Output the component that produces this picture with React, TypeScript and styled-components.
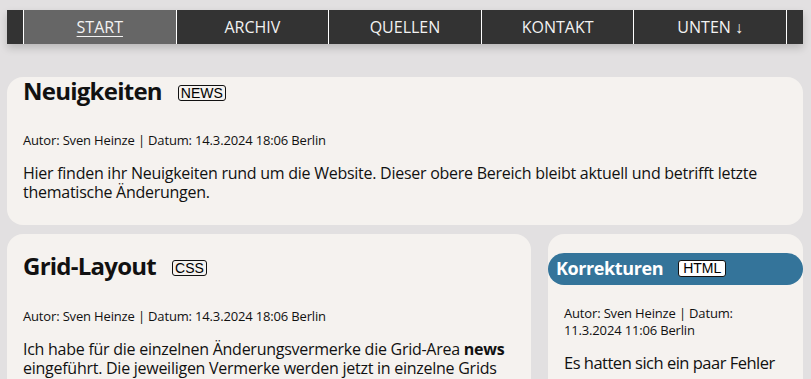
import React from "react";
import styled, { createGlobalStyle } from "styled-components";

const Global = createGlobalStyle`
  html, body { margin: 0; padding: 0; }
  body {
    background: #e2e0e1;
    font-family: "Open Sans", "Noto Sans", sans-serif;
    color: #111;
    overflow: hidden;
  }
`;

const Page = styled.div`
  padding: 10px 8px 0 7px;
  height: 379px;
  box-sizing: border-box;
`;

const Nav = styled.nav`
  background: #333;
  height: 34px;
  padding: 0 16px;
  display: flex;
  box-shadow: 0 4px 8px rgba(0, 0, 0, 0.18);
`;

const NavItem = styled.a<{ $active?: boolean; $last?: boolean }>`
  flex: 1;
  display: flex;
  align-items: center;
  justify-content: center;
  border-left: 1px solid #fff;
  border-right: ${(p) => (p.$last ? "1px solid #fff" : "none")};
  background: ${(p) => (p.$active ? "#666" : "transparent")};
  color: #f2f2f2;
  font-size: 16px;
  text-decoration: ${(p) => (p.$active ? "underline" : "none")};
  text-underline-offset: 3px;
  text-decoration-thickness: 1px;
`;

const Main = styled.main`
  margin-top: 33px;
  display: grid;
  grid-template-columns: 524px 1fr;
  grid-template-rows: auto 1fr;
  column-gap: 17px;
  row-gap: 9px;
`;

const Card = styled.section<{ $wide?: boolean; $top?: number; $pad?: number }>`
  grid-column: ${(p) => (p.$wide ? "1 / -1" : "auto")};
  background: #f5f2ef;
  border-radius: 16px;
  padding: ${(p) => p.$top ?? 20}px ${(p) => p.$pad ?? 16}px 23px;
  min-height: 0;
`;

const Title = styled.h2`
  margin: 0;
  font-size: 24px;
  line-height: 28px;
  font-weight: 700;
  letter-spacing: -0.75px;
  display: flex;
  align-items: center;
  gap: 16px;
`;

const Badge = styled.span<{ $fill?: boolean }>`
  font-family: "Liberation Sans", Arial, sans-serif;
  font-size: 14px;
  font-weight: 400;
  letter-spacing: 0;
  line-height: 13px;
  border: 1px solid #111;
  border-radius: 3px;
  padding: ${(p) => (p.$fill ? "1px 4px 1px" : "1px 2px 0")};
  color: #000;
  background: ${(p) => (p.$fill ? "#fff" : "transparent")};
  margin-top: ${(p) => (p.$fill ? 1 : 3)}px;
`;

const Band = styled.h2`
  margin: 0 -16px;
  height: 32px;
  background: #34749a;
  border-radius: 16px;
  color: #fff;
  font-size: 18px;
  font-weight: 700;
  letter-spacing: -0.4px;
  display: flex;
  align-items: center;
  gap: 15px;
  padding-left: 8px;
  padding-bottom: 2px;
  box-sizing: border-box;
`;

const Meta = styled.p<{ $top?: number }>`
  margin: ${(p) => p.$top ?? 20}px 0 0;
  font-size: 13px;
  line-height: 17px;
  letter-spacing: -0.16px;
`;

const Text = styled.p<{ $large?: boolean }>`
  margin: ${(p) => (p.$large ? 13 : 15)}px 0 0;
  font-size: ${(p) => (p.$large ? 16.5 : 16)}px;
  line-height: ${(p) => (p.$large ? 22 : 19)}px;
  letter-spacing: ${(p) => (p.$large ? -0.5 : -0.26)}px;
`;

const navItems = ["START", "ARCHIV", "QUELLEN", "KONTAKT", "UNTEN ↓"];

export default function App() {
  return (
    <>
      <Global />
      <Page>
        <Nav>
          {navItems.map((n, i) => (
            <NavItem key={n} $active={i === 0} $last={i === navItems.length - 1}>
              {n}
            </NavItem>
          ))}
        </Nav>
        <Main>
          <Card $wide $top={0}>
            <Title>
              Neuigkeiten <Badge>NEWS</Badge>
            </Title>
            <Meta $top={27}>Autor: Sven Heinze | Datum: 14.3.2024 18:06 Berlin</Meta>
            <Text>
              Hier finden ihr Neuigkeiten rund um die Website. Dieser obere Bereich bleibt aktuell und betrifft letzte
              thematische Änderungen.
            </Text>
          </Card>
          <Card $top={18}>
            <Title>
              Grid-Layout <Badge>CSS</Badge>
            </Title>
            <Meta $top={28}>Autor: Sven Heinze | Datum: 14.3.2024 18:06 Berlin</Meta>
            <Text>
              Ich habe für die einzelnen Änderungsvermerke die Grid-Area <b>news</b> eingeführt. Die jeweiligen
              Vermerke werden jetzt in einzelne Grids dargestellt.
            </Text>
          </Card>
          <Card $top={19}>
            <Band>
              Korrekturen <Badge $fill>HTML</Badge>
            </Band>
            <Meta $top={20}>Autor: Sven Heinze | Datum: 11.3.2024 11:06 Berlin</Meta>
            <Text $large>Es hatten sich ein paar Fehler eingeschlichen. Ein Teil davon</Text>
          </Card>
        </Main>
      </Page>
    </>
  );
}
